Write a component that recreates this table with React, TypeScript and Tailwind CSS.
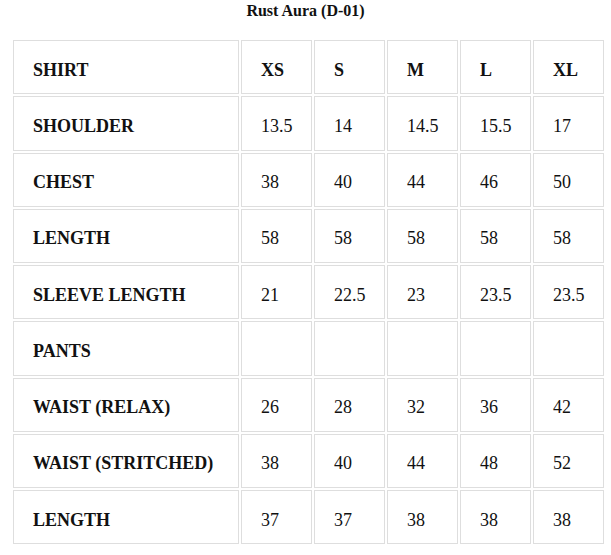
const SIZES = ["XS", "S", "M", "L", "XL"];

const rows: { label: string; values: string[] }[] = [
  { label: "SHOULDER", values: ["13.5", "14", "14.5", "15.5", "17"] },
  { label: "CHEST", values: ["38", "40", "44", "46", "50"] },
  { label: "LENGTH", values: ["58", "58", "58", "58", "58"] },
  { label: "SLEEVE LENGTH", values: ["21", "22.5", "23", "23.5", "23.5"] },
  { label: "PANTS", values: ["", "", "", "", ""] },
  { label: "WAIST (RELAX)", values: ["26", "28", "32", "36", "42"] },
  { label: "WAIST (STRITCHED)", values: ["38", "40", "44", "48", "52"] },
  { label: "LENGTH", values: ["37", "37", "38", "38", "38"] },
];

const cell = "h-[54.25px] border border-[#dedede] pl-[19px] pr-2 pt-[6px] align-middle";

export default function App() {
  return (
    <div className="w-[611px] h-[555px] bg-white text-[#111] font-['Liberation_Serif',serif]">
      <p className="text-center font-bold text-[16px] leading-[22px]">Rust Aura (D-01)</p>
      <table className="ml-[11px] mt-[16px] border-separate border-spacing-[2px] text-[18px] leading-[21px]">
        <tbody>
          <tr>
            <td className={`${cell} w-[226px] font-bold`}>SHIRT</td>
            {SIZES.map((s) => (
              <td key={s} className={`${cell} w-[71px] font-bold`}>
                {s}
              </td>
            ))}
          </tr>
          {rows.map((r, i) => (
            <tr key={i}>
              <td className={`${cell} font-bold`}>{r.label}</td>
              {r.values.map((v, j) => (
                <td key={j} className={cell}>
                  {v}
                </td>
              ))}
            </tr>
          ))}
        </tbody>
      </table>
    </div>
  );
}
